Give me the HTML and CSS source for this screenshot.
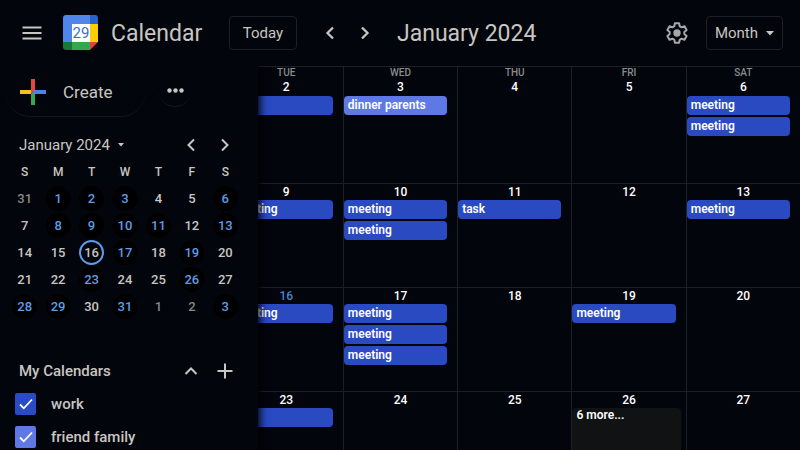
FILE: index.html
```html
<!DOCTYPE html>
<html lang="en">
<head>
<meta charset="utf-8">
<meta name="viewport" content="width=device-width, initial-scale=1">
<title>Calendar - January 2024</title>
<link rel="stylesheet" href="styles.css">
</head>
<body>
<header class="topbar">
  <button class="icon-btn menu-btn" type="button">
    <svg width="20" height="14" viewBox="0 0 20 14"><path d="M.5 1.500h19M.5 7h19M.5 12.500h19" stroke="currentColor" stroke-width="2"/></svg>
  </button>
  <a class="brand" href="#">
    <svg class="logo" width="36" height="36" viewBox="0 0 36 36">
      <path d="M3 0h24v9H9v18H0V3a3 3 0 0 1 3-3z" fill="#4f86ec"/>
      <path d="M27 0h5a3 3 0 0 1 3 3v6h-8z" fill="#2a62cb"/>
      <path d="M27 9h8v18h-8z" fill="#fccd05"/>
      <path d="M9 27h18v8H9z" fill="#33a852"/>
      <path d="M0 27h9v8H3a3 3 0 0 1-3-3z" fill="#14793a"/>
      <path d="M27 27h8l-8 8z" fill="#df4534"/>
      <path d="M9 9h18v18H9z" fill="#fff"/>
      <text class="logo-day" x="18" y="23" text-anchor="middle">29</text>
    </svg>
    <span class="brand-name">Calendar</span>
  </a>
  <button class="outline-btn today" type="button">Today</button>
  <nav class="pager">
    <button class="icon-btn" type="button"><svg width="12" height="14" viewBox="0 0 12 14"><path d="M9 1.500 3.500 7 9 12.500" fill="none" stroke="currentColor" stroke-width="2.300"/></svg></button>
    <button class="icon-btn" type="button"><svg width="12" height="14" viewBox="0 0 12 14"><path d="M3 1.500 8.500 7 3 12.500" fill="none" stroke="currentColor" stroke-width="2.300"/></svg></button>
  </nav>
  <h1 class="period">January 2024</h1>
  <button class="icon-btn settings" type="button">
    <svg width="24" height="24" viewBox="0 0 24 24"><path d="M9.900 2.200h4.200l.6 3 1.900 1.100 2.900-1 2.100 3.600-2.300 2v2.200l2.300 2-2.100 3.600-2.900-1-1.900 1.100-.6 3H9.900l-.6-3-1.900-1.100-2.900 1-2.100-3.600 2.300-2v-2.200l-2.300-2 2.100-3.600 2.900 1 1.900-1.100z" fill="none" stroke="currentColor" stroke-width="2" stroke-linejoin="round"/><circle cx="12" cy="12" r="3.700" fill="currentColor"/></svg>
  </button>
  <button class="outline-btn view" type="button">Month
    <svg width="8" height="5" viewBox="0 0 8 5"><path d="M0 0h8L4 4.500z" fill="currentColor"/></svg>
  </button>
</header>

<main class="workspace">
  <aside class="sidebar">
    <div class="create-row">
      <button class="create" type="button">
        <svg width="26" height="26" viewBox="0 0 26 26"><path d="M11 0h4v13h-4z" fill="#df4b3e"/><path d="M0 11h11v4H0z" fill="#f4c01c"/><path d="M11 15h4v11h-4z" fill="#34a853"/><path d="M15 11h11v4H11z" fill="#4b83ea"/><path d="M11 11h4l-4 4z" fill="#df4b3e"/></svg>
        Create
      </button>
      <button class="more" type="button"><svg width="17" height="5" viewBox="0 0 17 5"><g fill="currentColor"><circle cx="2.500" cy="2.500" r="2.200"/><circle cx="8.500" cy="2.500" r="2.200"/><circle cx="14.500" cy="2.500" r="2.200"/></g></svg></button>
    </div>

    <div class="mini-head">
      <button class="mini-title" type="button">January 2024
        <svg width="6" height="4" viewBox="0 0 6 4"><path d="M0 0h6L3 3.500z" fill="currentColor"/></svg>
      </button>
      <button class="icon-btn" type="button"><svg width="12" height="14" viewBox="0 0 12 14"><path d="M9 1.500 3.500 7 9 12.500" fill="none" stroke="currentColor" stroke-width="2"/></svg></button>
      <button class="icon-btn" type="button"><svg width="12" height="14" viewBox="0 0 12 14"><path d="M3 1.500 8.500 7 3 12.500" fill="none" stroke="currentColor" stroke-width="2"/></svg></button>
    </div>
    <table class="mini">
      <thead><tr><th>S</th><th>M</th><th>T</th><th>W</th><th>T</th><th>F</th><th>S</th></tr></thead>
      <tbody>
        <tr><td class="out">31</td><td class="busy">1</td><td class="busy">2</td><td class="busy">3</td><td>4</td><td>5</td><td class="busy">6</td></tr>
        <tr><td>7</td><td class="busy">8</td><td class="busy">9</td><td class="busy">10</td><td class="busy">11</td><td>12</td><td class="busy">13</td></tr>
        <tr><td>14</td><td>15</td><td><span class="current">16</span></td><td class="busy">17</td><td>18</td><td class="busy">19</td><td>20</td></tr>
        <tr><td>21</td><td>22</td><td class="busy">23</td><td>24</td><td>25</td><td class="busy">26</td><td>27</td></tr>
        <tr><td class="busy">28</td><td class="busy">29</td><td>30</td><td class="busy">31</td><td class="out">1</td><td class="out">2</td><td class="busy">3</td></tr>
      </tbody>
    </table>

    <div class="list-head">
      <h2>My Calendars</h2>
      <button class="icon-btn" type="button"><svg width="14" height="10" viewBox="0 0 14 10"><path d="M1.500 8 7 2.500 12.500 8" fill="none" stroke="currentColor" stroke-width="2"/></svg></button>
      <button class="icon-btn" type="button"><svg width="16" height="16" viewBox="0 0 16 16"><path d="M8 .5v15M.5 8h15" stroke="currentColor" stroke-width="2"/></svg></button>
    </div>
    <label class="cal-item"><input class="tick" type="checkbox" checked><svg class="check" width="14" height="12" viewBox="0 0 14 12"><path d="M1 6.500 4.800 10.300 13 1.500" fill="none" stroke="#fff" stroke-width="1.800"/></svg>work</label>
    <label class="cal-item"><input class="tick light" type="checkbox" checked><svg class="check" width="14" height="12" viewBox="0 0 14 12"><path d="M1 6.500 4.800 10.300 13 1.500" fill="none" stroke="#fff" stroke-width="1.800"/></svg>friend family</label>
  </aside>

  <table class="month">
    <thead><tr><th>TUE</th><th>WED</th><th>THU</th><th>FRI</th><th>SAT</th></tr></thead>
    <tbody>
      <tr>
        <td><div class="day">2</div><div class="event"></div></td>
        <td><div class="day">3</div><div class="event light">dinner parents</div></td>
        <td><div class="day">4</div></td>
        <td><div class="day">5</div></td>
        <td><div class="day">6</div><div class="event">meeting</div><div class="event">meeting</div></td>
      </tr>
      <tr>
        <td><div class="day">9</div><div class="event">meeting</div></td>
        <td><div class="day">10</div><div class="event">meeting</div><div class="event">meeting</div></td>
        <td><div class="day">11</div><div class="event">task</div></td>
        <td><div class="day">12</div></td>
        <td><div class="day">13</div><div class="event">meeting</div></td>
      </tr>
      <tr>
        <td><div class="day now">16</div><div class="event">meeting</div></td>
        <td><div class="day">17</div><div class="event">meeting</div><div class="event">meeting</div><div class="event">meeting</div></td>
        <td><div class="day">18</div></td>
        <td><div class="day">19</div><div class="event">meeting</div></td>
        <td><div class="day">20</div></td>
      </tr>
      <tr>
        <td><div class="day">23</div><div class="event"></div></td>
        <td><div class="day">24</div></td>
        <td><div class="day">25</div></td>
        <td><div class="day">26</div><div class="overflow">6 more...</div></td>
        <td><div class="day">27</div></td>
      </tr>
    </tbody>
  </table>
</main>
</body>
</html>
```

FILE: styles.css
```css
* { box-sizing: border-box; }

body {
  margin: 0;
  height: 100vh;
  overflow: hidden;
  display: flex;
  flex-direction: column;
  background: #02050c;
  color: #c9c6c1;
  font-family: Roboto, "Liberation Sans", sans-serif;
}

button {
  padding: 0;
  border: 0;
  background: none;
  color: inherit;
  font: inherit;
}

svg { display: block; flex: none; }

.icon-btn {
  display: grid;
  place-items: center;
  width: 24px;
  height: 24px;
}

/* Top bar */
.topbar {
  flex: none;
  display: flex;
  align-items: center;
  height: 66px;
  padding: 0 17px 0 20px;
}

.brand {
  display: flex;
  align-items: center;
  gap: 12px;
  margin-left: 19px;
  color: inherit;
  text-decoration: none;
}

.logo-day { font-size: 15px; fill: #3c6fc9; }
.brand-name { width: 118px; font-size: 23px; }

.outline-btn {
  display: flex;
  align-items: center;
  justify-content: center;
  gap: 8px;
  height: 34px;
  border: 1px solid #1d1f23;
  border-radius: 4px;
  font-size: 15px;
}

.today { width: 68px; }
.view { width: 77px; margin-left: 17px; }

.pager {
  display: flex;
  gap: 11px;
  margin-left: 21px;
}

.period {
  margin: 0 0 0 20px;
  font-size: 23px;
  font-weight: 400;
}

.settings { margin-left: auto; color: #a6a7a8; }

/* Workspace: the drawer lies over the month grid */
.workspace {
  flex: 1;
  min-height: 0;
  display: grid;
  grid-template-columns: 258px 1fr;
  overflow: hidden;
}

.sidebar {
  grid-area: 1 / 1;
  z-index: 1;
  padding-top: 1px;
  background: #02050c;
  box-shadow: 2px 0 8px #000;
}

.create-row {
  display: flex;
  gap: 14px;
  height: 64px;
  padding-left: 6px;
}

.create {
  display: flex;
  align-items: center;
  gap: 17px;
  width: 139px;
  height: 50px;
  padding-left: 14px;
  border-bottom: 1px solid #15171a;
  border-radius: 24px;
  font-size: 17px;
}

.more {
  display: grid;
  place-items: center;
  width: 32px;
  height: 32px;
  margin-top: 8px;
  border-bottom: 1px solid #15171a;
  border-radius: 16px;
}

.mini-head,
.list-head {
  display: flex;
  align-items: center;
  gap: 10px;
  padding: 0 21px 0 19px;
}

.mini-head { height: 28px; }

.mini-title {
  display: flex;
  align-items: center;
  gap: 8px;
  margin-right: auto;
  font-size: 15px;
}

.mini {
  width: 234px;
  margin-left: 8px;
  border-collapse: collapse;
  table-layout: fixed;
  font-size: 13px;
  font-weight: 500;
  text-align: center;
}

.mini th,
.mini td { height: 27px; padding: 0; }
.mini th { height: 26px; font-size: 12px; font-weight: 500; }
.mini .busy {
  color: #5e9bea;
  background: radial-gradient(circle, #000 12px, transparent 13px);
}
.mini .out { color: #898987; }

.current {
  display: grid;
  place-items: center;
  width: 25px;
  height: 25px;
  margin: auto;
  border: 2px solid #5e9bea;
  border-radius: 50%;
}

.list-head { height: 32px; margin-top: 35px; }

.list-head h2 {
  margin: 0 auto 0 0;
  font-size: 15px;
  font-weight: 500;
}

.cal-item {
  display: flex;
  align-items: center;
  height: 33px;
  padding-left: 15px;
  font-size: 15px;
  font-weight: 500;
}

.tick {
  appearance: none;
  width: 21px;
  height: 22px;
  margin: 0;
  border-radius: 2px;
  background: #2a4bc6;
}

.tick.light { background: #5e79e4; }
.check { margin: 0 18px 0 -17px; }

/* Month grid */
.month {
  grid-area: 1 / 1 / 2 / 3;
  justify-self: end;
  align-self: start;
  width: calc(100% * 5 / 7);
  border-collapse: separate;
  border-spacing: 0;
  table-layout: fixed;
}

.month th,
.month td {
  padding: 0;
  border-left: 1px solid #1d2022;
  vertical-align: top;
}

.month th {
  height: 13px;
  border-top: 1px solid #1d2022;
  color: #8b8c8d;
  font-size: 10px;
  font-weight: 500;
  line-height: 12px;
}

.month td { height: 104px; }
.month tbody tr + tr td { border-top: 1px solid #1d2022; }

.day {
  height: 16px;
  color: #fff;
  font-size: 12px;
  font-weight: 500;
  line-height: 16px;
  text-align: center;
}

.month tbody tr:first-child .day { height: 17px; }
.day.now { color: #4a82d6; }

.event {
  height: 19px;
  margin: 0 10px 2px 0;
  padding-left: 4px;
  border-radius: 4px;
  background: #2a4ac2;
  color: #fff;
  font-size: 12px;
  font-weight: 600;
  line-height: 19px;
}

.event.light { background: #5e79e4; }

.overflow {
  height: 86px;
  margin-right: 5px;
  padding-left: 4px;
  border-radius: 4px;
  background: #101214;
  color: #fff;
  font-size: 12px;
  font-weight: 600;
  line-height: 15px;
}
```
